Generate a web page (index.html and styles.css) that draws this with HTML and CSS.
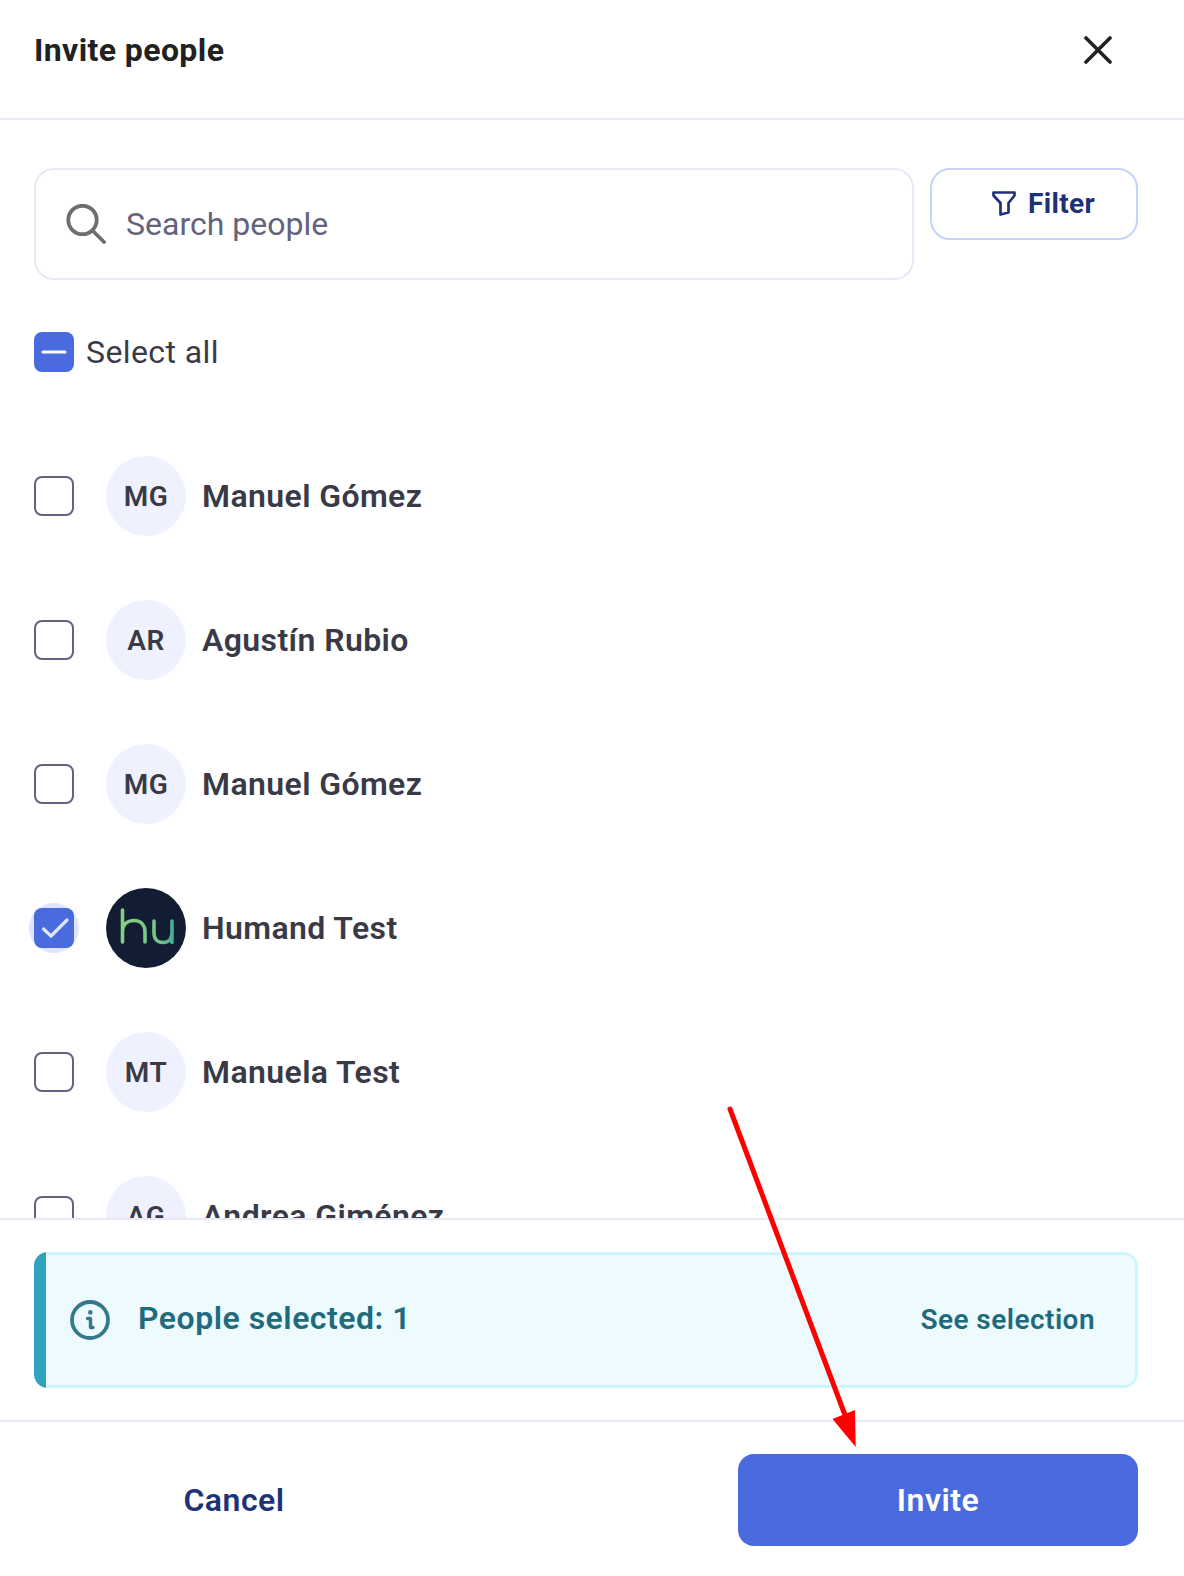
FILE: index.html
```html
<!DOCTYPE html>
<html lang="en">
<head>
<meta charset="utf-8">
<title>Invite people</title>
<link rel="stylesheet" href="styles.css">
</head>
<body>
<div class="dialog">
  <header class="header">
    <h1 class="title">Invite people</h1>
    <svg class="close" viewBox="0 0 28 28" width="28" height="28" fill="none" stroke="#212121" stroke-width="3.6" stroke-linecap="round"><path d="M2 2 26 26M26 2 2 26"/></svg>
  </header>
  <main class="body">
    <div class="toolbar">
      <div class="search">
        <svg class="search-icon" viewBox="0 0 40 40" width="40" height="40" fill="none" stroke="#6e6e6e" stroke-width="3.8" stroke-linecap="round"><circle cx="16.5" cy="16" r="14.2"/><path d="M27 27 38 38"/></svg>
        <span class="placeholder">Search people</span>
      </div>
      <button class="filter">
        <svg viewBox="0 0 24 25" width="24" height="25" fill="none" stroke="#1e3278" stroke-width="2.7" stroke-linejoin="round"><path d="M1.5 1.5H22.5V4.5L16.5 12V21.5L8.5 23.5V12L1.5 4.5Z"/></svg>
        <span>Filter</span>
      </button>
    </div>
    <label class="select-all">
      <span class="box box-on"><svg viewBox="0 0 40 40" width="40" height="40" fill="none" stroke="#fff" stroke-width="3" stroke-linecap="round"><path d="M9 20H31"/></svg></span>
      <span>Select all</span>
    </label>
    <ul class="people">
      <li class="person"><span class="box"></span><span class="avatar">MG</span><span class="name">Manuel Gómez</span></li>
      <li class="person"><span class="box"></span><span class="avatar">AR</span><span class="name">Agustín Rubio</span></li>
      <li class="person"><span class="box"></span><span class="avatar">MG</span><span class="name">Manuel Gómez</span></li>
      <li class="person">
        <span class="box box-on box-halo"><svg viewBox="0 0 40 40" width="40" height="40" fill="none" stroke="#dfe5fb" stroke-width="3.2" stroke-linecap="round" stroke-linejoin="round"><path d="M9.5 21 17 28 33 12"/></svg></span>
        <span class="avatar avatar-logo">
          <svg viewBox="0 0 80 80" width="80" height="80" fill="none" stroke="url(#hu)" stroke-width="3.6" stroke-linecap="round" stroke-linejoin="round">
            <defs><linearGradient id="hu" gradientUnits="userSpaceOnUse" x1="16" y1="0" x2="67" y2="0"><stop offset="0" stop-color="#86cf80"/><stop offset="0.75" stop-color="#74c488"/><stop offset="1" stop-color="#45ad96"/></linearGradient></defs>
            <path d="M16.5 22V54M16.5 44C16.5 37 21 32.5 28 32.5C35 32.5 39 37 39 44V54M48 33V45C48 51 51.5 54.5 57 54.5C62.5 54.5 66 51 66 45V33M66 45V54.5"/>
          </svg>
        </span>
        <span class="name">Humand Test</span>
      </li>
      <li class="person"><span class="box"></span><span class="avatar">MT</span><span class="name">Manuela Test</span></li>
      <li class="person"><span class="box"></span><span class="avatar">AG</span><span class="name">Andrea Giménez</span></li>
    </ul>
  </main>
  <section class="selection">
    <div class="alert">
      <span class="alert-bar"></span>
      <div class="alert-body">
        <svg viewBox="0 0 40 40" width="40" height="40" fill="none" stroke="#34798a" stroke-width="3.8" stroke-linecap="round" stroke-linejoin="round"><circle cx="20" cy="20" r="18"/><path d="M17.5 18.5H20.5V27.5H23" stroke-width="3.4"/><path d="M20.3 12.3V12.6" stroke-width="4.4"/></svg>
        <span class="alert-text">People selected: 1</span>
        <span class="alert-link">See selection</span>
      </div>
    </div>
  </section>
  <footer class="footer">
    <button class="btn btn-text">Cancel</button>
    <button class="btn btn-primary">Invite</button>
  </footer>
</div>
<svg class="arrow" viewBox="0 0 1184 1576" width="1184" height="1576" fill="none">
  <path d="M730 1109 845 1415" stroke="#ff0000" stroke-width="5" stroke-linecap="round"/>
  <path d="M832.5 1419 855 1410 855.7 1447Z" fill="#ff0000"/>
</svg>
</body>
</html>
```
FILE: styles.css
```css
* { box-sizing: border-box; }
html, body { margin: 0; padding: 0; height: 100%; }
body {
  font-family: Roboto, "Liberation Sans", sans-serif;
  background: #fff;
  color: #3a3a47;
  position: relative;
  overflow: hidden;
}
.dialog {
  width: 1184px;
  height: 1576px;
  display: flex;
  flex-direction: column;
}
.header {
  flex: none;
  height: 120px;
  padding: 0 72px 18px 34px;
  display: flex;
  align-items: center;
  justify-content: space-between;
  border-bottom: 2px solid #e8e8f6;
}
.title {
  margin: 0;
  font-size: 32px;
  font-weight: 700;
  letter-spacing: 0.4px;
  color: #212121;
  line-height: 40px;
}
.close { display: block; }
.body {
  flex: 1;
  min-height: 0;
  overflow: hidden;
  padding: 48px 46px 0 34px;
}
.toolbar {
  display: flex;
  align-items: flex-start;
  gap: 16px;
}
.search {
  flex: 1;
  height: 112px;
  border: 2px solid #e8e8f6;
  border-radius: 20px;
  display: flex;
  align-items: center;
  gap: 20px;
  padding-left: 30px;
}
.search-icon { display: block; }
.placeholder {
  font-size: 32px;
  color: #63637b;
}
.filter {
  flex: none;
  width: 208px;
  height: 72px;
  border: 2px solid #c6d3f8;
  border-radius: 20px;
  background: #fff;
  display: flex;
  align-items: center;
  gap: 12px;
  padding: 0 0 2px 60px;
  font: 700 28px Roboto, "Liberation Sans", sans-serif;
  letter-spacing: 0.35px;
  color: #1e3278;
}
.select-all {
  display: flex;
  align-items: center;
  gap: 12px;
  margin-top: 52px;
  height: 40px;
  font-size: 32px;
  letter-spacing: 0.4px;
  color: #3a3a47;
}
.box {
  flex: none;
  width: 40px;
  height: 40px;
  border: 2px solid #63637b;
  border-radius: 8px;
  background: #fff;
  display: block;
}
.box-on {
  border: 0;
  background: #4a6bde;
}
.box svg { display: block; position: relative; }
.box-halo { position: relative; }
.box-halo::before {
  content: "";
  position: absolute;
  inset: -5px;
  border-radius: 50%;
  background: #dfe5fb;
}
.box-halo::after {
  content: "";
  position: absolute;
  inset: 0;
  border-radius: 8px;
  background: #4a6bde;
}
.box-halo svg { z-index: 1; }
.people {
  list-style: none;
  margin: 52px 0 0;
  padding: 0;
}
.person {
  height: 144px;
  display: flex;
  align-items: center;
  gap: 32px;
}
.avatar {
  flex: none;
  width: 80px;
  height: 80px;
  border-radius: 50%;
  background: #eff2fe;
  display: flex;
  align-items: center;
  justify-content: center;
  font-size: 28px;
  font-weight: 600;
  letter-spacing: 0.5px;
  color: #3a3a47;
}
.avatar-logo { background: #121c33; }
.avatar-logo svg { display: block; }
.name {
  font-size: 32px;
  font-weight: 600;
  letter-spacing: 0.4px;
  color: #3a3a47;
  margin-left: -16px;
}
.selection {
  flex: none;
  height: 204px;
  border-top: 2px solid #e8e8f6;
  border-bottom: 2px solid #e8e8f6;
  padding: 32px 46px 0 34px;
  background: #fff;
}
.alert {
  height: 136px;
  display: flex;
  border-radius: 14px;
  overflow: hidden;
  color: #1f6b7d;
}
.alert-bar {
  flex: none;
  width: 12px;
  background: #30a3bd;
}
.alert-body {
  flex: 1;
  min-width: 0;
  display: flex;
  align-items: center;
  padding: 0 40px 0 24px;
  border: 3px solid #cff5fe;
  border-left: 0;
  border-radius: 0 14px 14px 0;
  background: #edfbff;
}
.alert-body svg { display: block; flex: none; }
.alert-text {
  font-size: 32px;
  font-weight: 600;
  letter-spacing: 0.5px;
  margin-left: 28px;
  padding-bottom: 4px;
  flex: 1;
}
.alert-link {
  font-size: 28px;
  font-weight: 600;
  letter-spacing: 0.45px;
  padding-bottom: 2px;
}
.footer {
  flex: none;
  height: 154px;
  display: flex;
  justify-content: space-between;
  padding: 32px 46px 30px 34px;
}
.btn {
  width: 400px;
  height: 92px;
  border: 0;
  border-radius: 16px;
  font: 600 32px Roboto, "Liberation Sans", sans-serif;
  letter-spacing: 0.5px;
}
.btn-text { background: transparent; color: #1e3278; }
.btn-primary { background: #4a6bde; color: #fff; }
.arrow {
  position: absolute;
  left: 0;
  top: 0;
  pointer-events: none;
}
```
